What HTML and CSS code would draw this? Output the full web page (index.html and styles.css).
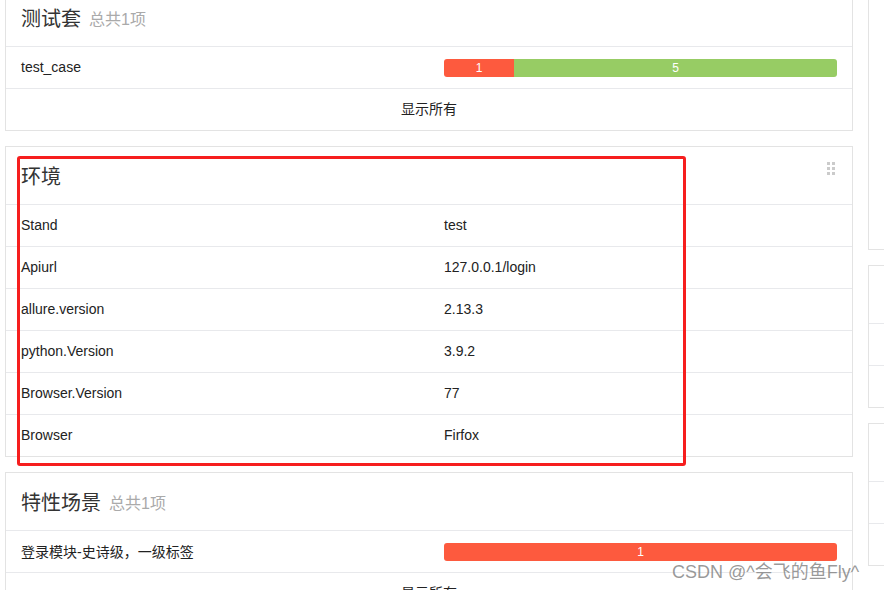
FILE: index.html
```html
<!DOCTYPE html>
<html lang="zh-CN">
<head>
    <meta charset="UTF-8">
    <meta name="viewport" content="width=device-width, initial-scale=1.0">
    <title>Allure Report</title>
    <link rel="stylesheet" href="styles.css">
</head>
<body>
    <div class="page">
        <div class="column column-main">
            <div class="widget">
                <div class="widget-title">测试套 <span class="widget-count">总共1项</span></div>
                <div class="table-row">
                    <div class="cell">test_case</div>
                    <div class="cell cell-bar">
                        <div class="bar">
                            <div class="bar-part failed" style="width: 70px">1</div>
                            <div class="bar-part passed" style="flex: 1">5</div>
                        </div>
                    </div>
                </div>
                <div class="table-row show-all">显示所有</div>
            </div>

            <div class="widget widget-env">
                <div class="widget-title">
                    <span>环境</span>
                    <span class="drag-handle"><i></i><i></i><i></i><i></i><i></i><i></i></span>
                </div>
                <div class="table-row"><div class="cell">Stand</div><div class="cell">test</div></div>
                <div class="table-row"><div class="cell">Apiurl</div><div class="cell">127.0.0.1/login</div></div>
                <div class="table-row"><div class="cell">allure.version</div><div class="cell">2.13.3</div></div>
                <div class="table-row"><div class="cell">python.Version</div><div class="cell">3.9.2</div></div>
                <div class="table-row"><div class="cell">Browser.Version</div><div class="cell">77</div></div>
                <div class="table-row"><div class="cell">Browser</div><div class="cell">Firfox</div></div>
                <div class="highlight"></div>
            </div>

            <div class="widget">
                <div class="widget-title">特性场景 <span class="widget-count">总共1项</span></div>
                <div class="table-row">
                    <div class="cell">登录模块-史诗级，一级标签</div>
                    <div class="cell cell-bar">
                        <div class="bar">
                            <div class="bar-part failed" style="flex: 1">1</div>
                        </div>
                    </div>
                </div>
                <div class="table-row show-all">显示所有</div>
            </div>
        </div>

        <div class="column column-side">
            <div class="widget widget-tall"></div>
            <div class="widget">
                <div class="widget-title"></div>
                <div class="table-row"></div>
                <div class="table-row"></div>
            </div>
            <div class="widget">
                <div class="widget-title"></div>
                <div class="table-row"></div>
                <div class="table-row"></div>
            </div>
        </div>
    </div>

    <div class="watermark">CSDN @^会飞的鱼Fly^</div>
</body>
</html>
```

FILE: styles.css
```css
body {
    margin: 0;
    overflow: hidden;
    height: 590px;
    background: #fff;
    font-family: "Liberation Sans", Arial, "Noto Sans CJK SC", sans-serif;
    font-size: 14px;
    color: #222;
}

.page {
    display: flex;
    gap: 15px;
    padding-left: 5px;
    margin-top: -12px;
}

.column {
    display: flex;
    flex-direction: column;
    gap: 15px;
    flex-shrink: 0;
}

.column-main {
    width: 848px;
}

.column-side {
    width: 420px;
}

.widget {
    position: relative;
    border: 1px solid #e3e3e3;
    background: #fff;
}

.widget-tall {
    height: 260px;
}

.widget-title {
    display: flex;
    align-items: center;
    justify-content: space-between;
    height: 57px;
    padding: 0 15px;
    font-size: 20px;
    color: #333;
}

.widget-title .widget-count {
    margin-left: 8px;
    margin-right: auto;
    font-size: 16px;
    color: #aaa;
}

.widget-title:has(.widget-count) {
    justify-content: flex-start;
}

.table-row {
    display: flex;
    align-items: center;
    height: 41px;
    border-top: 1px solid #e8e9ec;
}

.cell {
    width: 50%;
    padding: 0 15px;
    margin-bottom: 2px;
    box-sizing: border-box;
}

.cell-bar {
    margin-bottom: 0;
}

.show-all {
    justify-content: center;
    box-sizing: border-box;
    height: 42px;
    padding-bottom: 4px;
}

.bar {
    display: flex;
    height: 18px;
    border-radius: 3px;
    overflow: hidden;
}

.bar-part {
    color: #fff;
    font-size: 12px;
    line-height: 18px;
    text-align: center;
}

.failed {
    background: #fd5a3e;
}

.passed {
    background: #97cc64;
}

.drag-handle {
    align-self: flex-start;
    margin-top: 15px;
    margin-right: 2px;
    display: grid;
    grid-template-columns: 3px 3px;
    grid-auto-rows: 3px;
    gap: 2px;
}

.drag-handle i {
    background: #cbcbcb;
}

.highlight {
    position: absolute;
    left: 11px;
    top: 9px;
    width: 669px;
    height: 310px;
    box-sizing: border-box;
    border: 3px solid #f61e1e;
    border-radius: 3px;
}

.watermark {
    position: absolute;
    left: 672px;
    top: 557px;
    font-size: 18px;
    color: rgba(120, 120, 120, 0.75);
    white-space: nowrap;
}
```
